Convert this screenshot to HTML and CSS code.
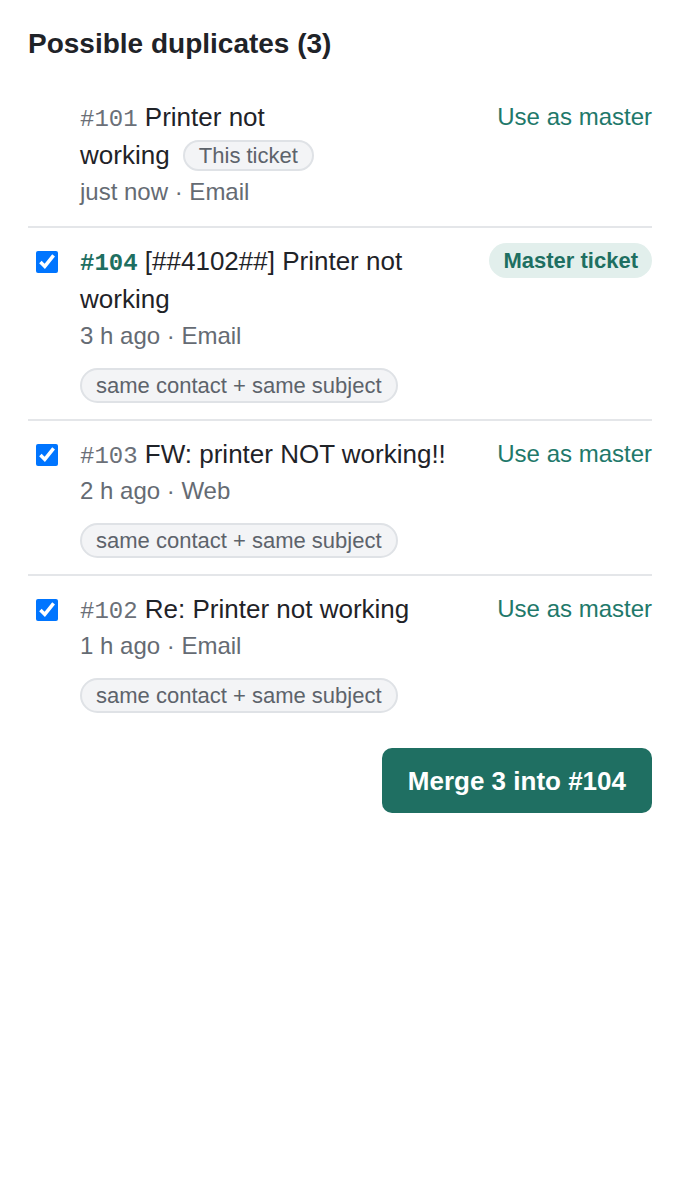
FILE: index.html
```html
<!DOCTYPE html>
<html lang="en">
<head>
<meta charset="utf-8">
<title>Possible duplicates</title>
<link rel="stylesheet" href="styles.css">
</head>
<body>
<section class="panel">
  <h2 class="heading">Possible duplicates (3)</h2>
  <ul class="list">
    <li class="row">
      <div class="check"></div>
      <div class="content">
        <div class="title"><span class="num">#101</span> Printer not <span class="nowrap">working <span class="tag">This ticket</span></span></div>
        <div class="meta">just now · Email</div>
      </div>
      <div class="action"><a class="link">Use as master</a></div>
    </li>
    <li class="row">
      <div class="check"><input type="checkbox" checked></div>
      <div class="content">
        <div class="title"><span class="num num-master">#104</span> [##4102##] Printer not working</div>
        <div class="meta">3 h ago · Email</div>
        <span class="chip">same contact + same subject</span>
      </div>
      <div class="action"><span class="master">Master ticket</span></div>
    </li>
    <li class="row">
      <div class="check"><input type="checkbox" checked></div>
      <div class="content">
        <div class="title"><span class="num">#103</span> FW: printer NOT working!!</div>
        <div class="meta">2 h ago · Web</div>
        <span class="chip">same contact + same subject</span>
      </div>
      <div class="action"><a class="link">Use as master</a></div>
    </li>
    <li class="row">
      <div class="check"><input type="checkbox" checked></div>
      <div class="content">
        <div class="title"><span class="num">#102</span> Re: Printer not working</div>
        <div class="meta">1 h ago · Email</div>
        <span class="chip">same contact + same subject</span>
      </div>
      <div class="action"><a class="link">Use as master</a></div>
    </li>
  </ul>
  <div class="footer">
    <button class="merge">Merge 3 into #104</button>
  </div>
</section>
</body>
</html>
```
FILE: styles.css
```css
html, body {
  margin: 0;
  background: #ffffff;
}
body {
  font-family: "Liberation Sans", Arial, sans-serif;
  color: #1f2328;
}
.panel {
  padding: 24px 28px;
}
.heading {
  margin: 0 0 20px;
  font-size: 28px;
  line-height: 40px;
  font-weight: 700;
  color: #1f2328;
}
.list {
  list-style: none;
  margin: 0;
  padding: 0;
}
.row {
  display: flex;
  align-items: flex-start;
  padding: 14px 0 16px;
  border-top: 2px solid #e4e6e9;
}
.row:first-child {
  border-top: none;
}
.check {
  flex: none;
  box-sizing: border-box;
  width: 52px;
  padding-left: 8px;
  padding-top: 9px;
}
.check input {
  width: 22px;
  height: 22px;
  margin: 0;
  display: block;
}
.content {
  flex: 1;
  min-width: 0;
  margin-right: 16px;
}
.title {
  font-size: 26px;
  line-height: 38px;
}
.num {
  font-family: "Liberation Mono", monospace;
  font-size: 24px;
  line-height: 1;
  color: #6b7078;
}
.num-master {
  color: #1e6f61;
  font-weight: 700;
}
.nowrap {
  white-space: nowrap;
}
.tag {
  display: inline-block;
  margin-left: 6px;
  padding: 2px 14px;
  font-size: 22px;
  line-height: 23px;
  color: #5d636b;
  background: #f3f4f6;
  border: 2px solid #dfe2e6;
  border-radius: 999px;
  vertical-align: 1px;
}
.meta {
  font-size: 24px;
  line-height: 36px;
  color: #656b73;
}
.chip {
  display: inline-block;
  margin-top: 14px;
  padding: 4px 14px;
  font-size: 22px;
  line-height: 23px;
  color: #5d636b;
  background: #f3f4f6;
  border: 2px solid #dfe2e6;
  border-radius: 999px;
}
.action {
  flex: none;
}
.link {
  display: block;
  font-size: 24px;
  line-height: 38px;
  color: #21786a;
  cursor: pointer;
}
.master {
  display: inline-block;
  margin-top: 1px;
  padding: 4px 14px;
  font-size: 22px;
  line-height: 27px;
  font-weight: 700;
  color: #1e6f61;
  background: #e2efec;
  border-radius: 999px;
}
.footer {
  display: flex;
  justify-content: flex-end;
  margin-top: 19px;
}
.merge {
  font-family: "Liberation Sans", Arial, sans-serif;
  font-size: 26px;
  line-height: 30px;
  font-weight: 700;
  color: #ffffff;
  background: #1f6f62;
  border: none;
  border-radius: 10px;
  padding: 18px 26px 17px;
  cursor: pointer;
}
```
